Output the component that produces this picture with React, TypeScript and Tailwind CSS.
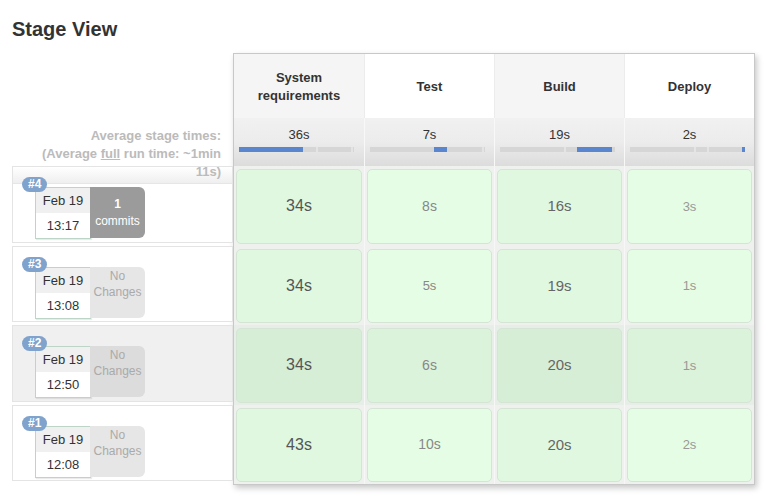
import * as React from 'react';

type Run = {
  id: number;
  time: string;
  commits?: number;
  highlight?: boolean;
  cells: { v: string; cls: string }[];
};

const stages = [
  { name: 'System requirements', avg: '36s', from: 0, to: 56, head: 'bg-[#f5f5f5]' },
  { name: 'Test', avg: '7s', from: 56, to: 67, head: 'bg-white' },
  { name: 'Build', avg: '19s', from: 67, to: 97, head: 'bg-[#f5f5f5]' },
  { name: 'Deploy', avg: '2s', from: 97, to: 100, head: 'bg-white' },
];

const ticks = [56, 67, 97];

const runs: Run[] = [
  {
    id: 4, time: '13:17', commits: 1,
    cells: [
      { v: '34s', cls: 'text-[16px] text-[#555]' },
      { v: '8s', cls: 'text-[14px] text-[#888]' },
      { v: '16s', cls: 'text-[15px] text-[#666]' },
      { v: '3s', cls: 'text-[13px] text-[#999]' },
    ],
  },
  {
    id: 3, time: '13:08',
    cells: [
      { v: '34s', cls: 'text-[16px] text-[#555]' },
      { v: '5s', cls: 'text-[13px] text-[#888]' },
      { v: '19s', cls: 'text-[15px] text-[#666]' },
      { v: '1s', cls: 'text-[13px] text-[#999]' },
    ],
  },
  {
    id: 2, time: '12:50', highlight: true,
    cells: [
      { v: '34s', cls: 'text-[16px] text-[#555]' },
      { v: '6s', cls: 'text-[14px] text-[#888]' },
      { v: '20s', cls: 'text-[15px] text-[#666]' },
      { v: '1s', cls: 'text-[13px] text-[#999]' },
    ],
  },
  {
    id: 1, time: '12:08',
    cells: [
      { v: '43s', cls: 'text-[16px] text-[#555]' },
      { v: '10s', cls: 'text-[14px] text-[#888]' },
      { v: '20s', cls: 'text-[15px] text-[#666]' },
      { v: '2s', cls: 'text-[13px] text-[#999]' },
    ],
  },
];

function cellColor(col: number, highlight?: boolean) {
  if (highlight) return col % 2 === 0 ? 'bg-[#d6edd6]' : 'bg-[#dbf2db]';
  return col % 2 === 0 ? 'bg-[#dff8df]' : 'bg-[#e5fde5]';
}

function RunInfo({ run, first }: { run: Run; first: boolean }) {
  return (
    <div className={`relative h-[76.5px] mb-[3px] border border-[#e4e4e4] ${run.highlight ? 'bg-[#f0f0f0]' : 'bg-white'}`}>
      {first && <div className="h-[17px] bg-gradient-to-b from-white to-[#efefef] border-b border-[#e6e6e6]" />}
      <span className="absolute left-[9px] top-[10px] z-20 rounded-full bg-[#7fa3cc] px-[6px] text-[12px] leading-[15px] font-bold text-white">
        #{run.id}
      </span>
      <div className="absolute left-[22px] top-[20px] flex">
        <div className="w-[56px] border border-[#bcd5c6] bg-white text-center text-[13px] text-[#333] shadow-[1px_1px_1px_rgba(0,0,0,0.08)]">
          <div className="h-[25px] leading-[25px] bg-[#f0f0f0]">Feb 19</div>
          <div className="h-[25px] leading-[25px]">{run.time}</div>
        </div>
        {run.commits ? (
          <div className="-ml-[1px] w-[55px] h-[51px] rounded-r-[6px] bg-[#9b9b9b] flex flex-col items-center justify-center text-[12px] leading-[17px] text-white">
            <span className="font-bold">{run.commits}</span>
            <span>commits</span>
          </div>
        ) : (
          <div className={`-ml-[1px] w-[55px] h-[51px] rounded-r-[6px] flex flex-col items-center justify-start pt-[1px] text-[12px] leading-[16px] text-[#aaa] ${run.highlight ? 'bg-[#dcdcdc]' : 'bg-[#e6e6e6]'}`}>
            <span>No</span>
            <span>Changes</span>
          </div>
        )}
      </div>
    </div>
  );
}

export default function App() {
  return (
    <div className="min-h-screen bg-white pl-[12px] pt-[17px] font-['Liberation_Sans',Arial,sans-serif]">
      <h1 className="text-[20px] leading-[24px] font-bold text-[#333]">Stage View</h1>
      <div className="mt-[12px] flex items-start">
        <div className="w-[221px]">
          <div className="relative z-30 h-[113px] pt-[74px] pr-[12px] text-right text-[13px] leading-[18px] font-bold text-[#bbb]">
            Average stage times:
            <br />
            (Average <span className="underline">full</span> run time: ~1min
            <br />
            11s)
          </div>
          {runs.map((r, i) => (
            <RunInfo key={r.id} run={r} first={i === 0} />
          ))}
        </div>
        <div className="border border-[#c8c8c8] shadow-[2px_3px_6px_rgba(0,0,0,0.22)] bg-[#eeeeee]">
          <div className="grid grid-cols-[repeat(4,130px)]">
            {stages.map((s, i) => (
              <div
                key={s.name}
                className={`h-[64px] pt-[1px] flex items-center justify-center px-4 text-center text-[13px] leading-[18px] font-bold text-[#333] ${s.head} ${i > 0 ? 'border-l border-[#ececec]' : ''}`}
              >
                {s.name}
              </div>
            ))}
            {stages.map((s, i) => (
              <div
                key={s.name + 'avg'}
                className={`h-[48px] pt-[9px] bg-gradient-to-b from-[#f1f1f1] via-[#ececec] to-[#dcdcdc] ${i > 0 ? 'border-l border-[#f8f8f8]' : ''}`}
              >
                <div className="text-center text-[13px] leading-[16px] text-[#333]">{s.avg}</div>
                <div className="relative ml-[5px] mt-[4px] h-[5px] w-[115px] bg-[#d6d6d6]">
                  {ticks
                    .filter((t) => t !== s.from && t !== s.to)
                    .map((t) => (
                      <div key={t} className="absolute top-0 h-[5px] w-[2px] bg-[#e4e4e4]" style={{ left: `${t}%` }} />
                    ))}
                  <div
                    className="absolute top-0 h-[5px] bg-[#5a86cf]"
                    style={{ left: `${s.from}%`, width: `${s.to - s.from}%` }}
                  />
                </div>
              </div>
            ))}
            {runs.map((r) =>
              r.cells.map((c, i) => (
                <div
                  key={`${r.id}-${i}`}
                  className={`h-[79.5px] px-[2px] pt-[3px] pb-[2px] ${r.highlight ? 'bg-[#e7ede7]' : 'bg-[#eef1ee]'} ${i > 0 ? 'border-l border-[#f7f7f7]' : ''}`}
                >
                  <div
                    className={`h-full rounded-[5px] border border-[#d6e4d6] flex items-center justify-center ${cellColor(i, r.highlight)} ${c.cls}`}
                  >
                    {c.v}
                  </div>
                </div>
              ))
            )}
          </div>
        </div>
      </div>
    </div>
  );
}
